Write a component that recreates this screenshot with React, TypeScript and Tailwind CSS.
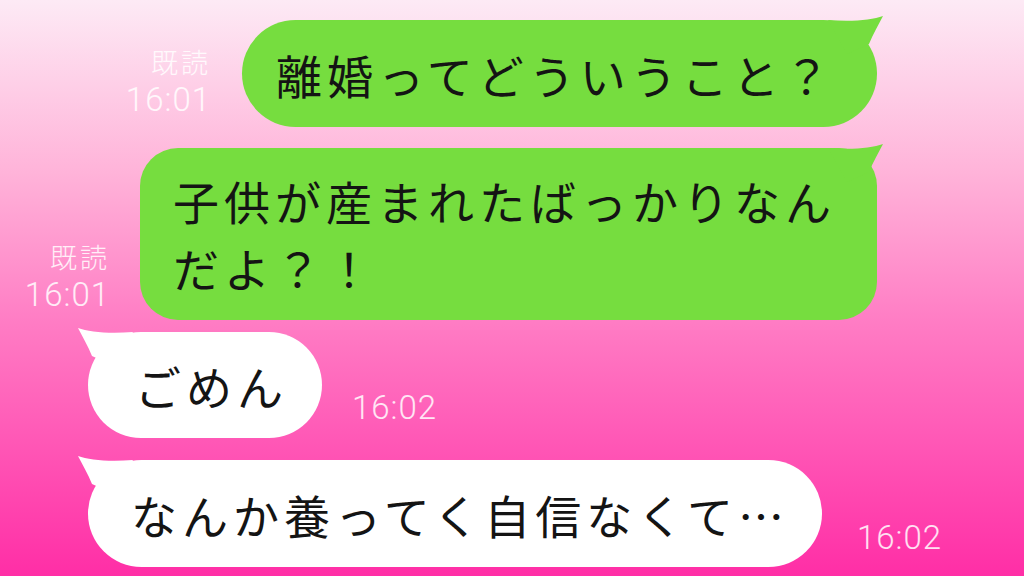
const jp = { fontFamily: '"Noto Sans CJK JP", "Noto Sans", sans-serif' };
const num = { fontFamily: 'Roboto, "Liberation Sans", sans-serif' };

function Tail({ color, left }: { color: string; left?: boolean }) {
  return (
    <svg
      viewBox="0 0 70 60"
      className={
        left
          ? "absolute -left-[14px] -top-[6px] w-[70px] h-[60px] -scale-x-100"
          : "absolute -right-[10px] -top-[6px] w-[70px] h-[60px]"
      }
    >
      <path d="M11 6 C35 8 55 6 66 2 C62 10 56 20 52 30 L30 40 Z" fill={color} />
    </svg>
  );
}

function Receipt({ time, read }: { time: string; read?: boolean }) {
  return (
    <div className="flex flex-col items-end text-white/85">
      {read && (
        <span className="text-[27px] leading-none mb-[8px] tracking-[3px] font-light" style={jp}>
          既読
        </span>
      )}
      <span className="text-[33px] leading-none font-light tracking-[1px]" style={num}>
        {time}
      </span>
    </div>
  );
}

export default function App() {
  return (
    <div className="w-[1024px] h-[576px] overflow-hidden bg-[linear-gradient(180deg,#fdeaf5_0%,#ffb3d9_30%,#ff7cc4_56%,#ff2ea6_100%)] text-[#141414]">
      <div className="flex flex-col pt-[20px]">
        {/* sent 1 */}
        <div className="flex items-end justify-end pr-[147px]">
          <div className="mr-[31px] mb-[11px]">
            <Receipt time="16:01" read />
          </div>
          <div className="relative w-[635px] h-[107px] rounded-full bg-[#76dd3f] flex items-center pl-[34px]">
            <Tail color="#76dd3f" />
            <span className="relative text-[46px] leading-none tracking-[5px]" style={jp}>
              離婚ってどういうこと？
            </span>
          </div>
        </div>

        {/* sent 2 */}
        <div className="flex items-end justify-end pr-[147px] mt-[21px]">
          <div className="mr-[30px] mb-[9px]">
            <Receipt time="16:01" read />
          </div>
          <div className="relative w-[737px] h-[172px] rounded-[38px] bg-[#76dd3f] flex flex-col justify-center pl-[33px]">
            <Tail color="#76dd3f" />
            <span className="relative text-[46px] leading-[67px] tracking-[5px]" style={jp}>
              子供が産まれたばっかりなん
              <br />
              だよ？！
            </span>
          </div>
        </div>

        {/* received 1 */}
        <div className="flex items-end pl-[88px] mt-[12px]">
          <div className="relative w-[234px] h-[106px] rounded-full bg-white flex items-center pl-[47px]">
            <Tail color="#ffffff" left />
            <span className="relative text-[46px] leading-none tracking-[5px]" style={jp}>
              ごめん
            </span>
          </div>
          <div className="ml-[30px] mb-[14px]">
            <Receipt time="16:02" />
          </div>
        </div>

        {/* received 2 */}
        <div className="flex items-end pl-[88px] mt-[22px]">
          <div className="relative w-[734px] h-[107px] rounded-full bg-white flex items-center pl-[43px]">
            <Tail color="#ffffff" left />
            <span className="relative text-[46px] leading-none tracking-[5px]" style={jp}>
              なんか養ってく自信なくて…
            </span>
          </div>
          <div className="ml-[35px] mb-[13px]">
            <Receipt time="16:02" />
          </div>
        </div>
      </div>
    </div>
  );
}
